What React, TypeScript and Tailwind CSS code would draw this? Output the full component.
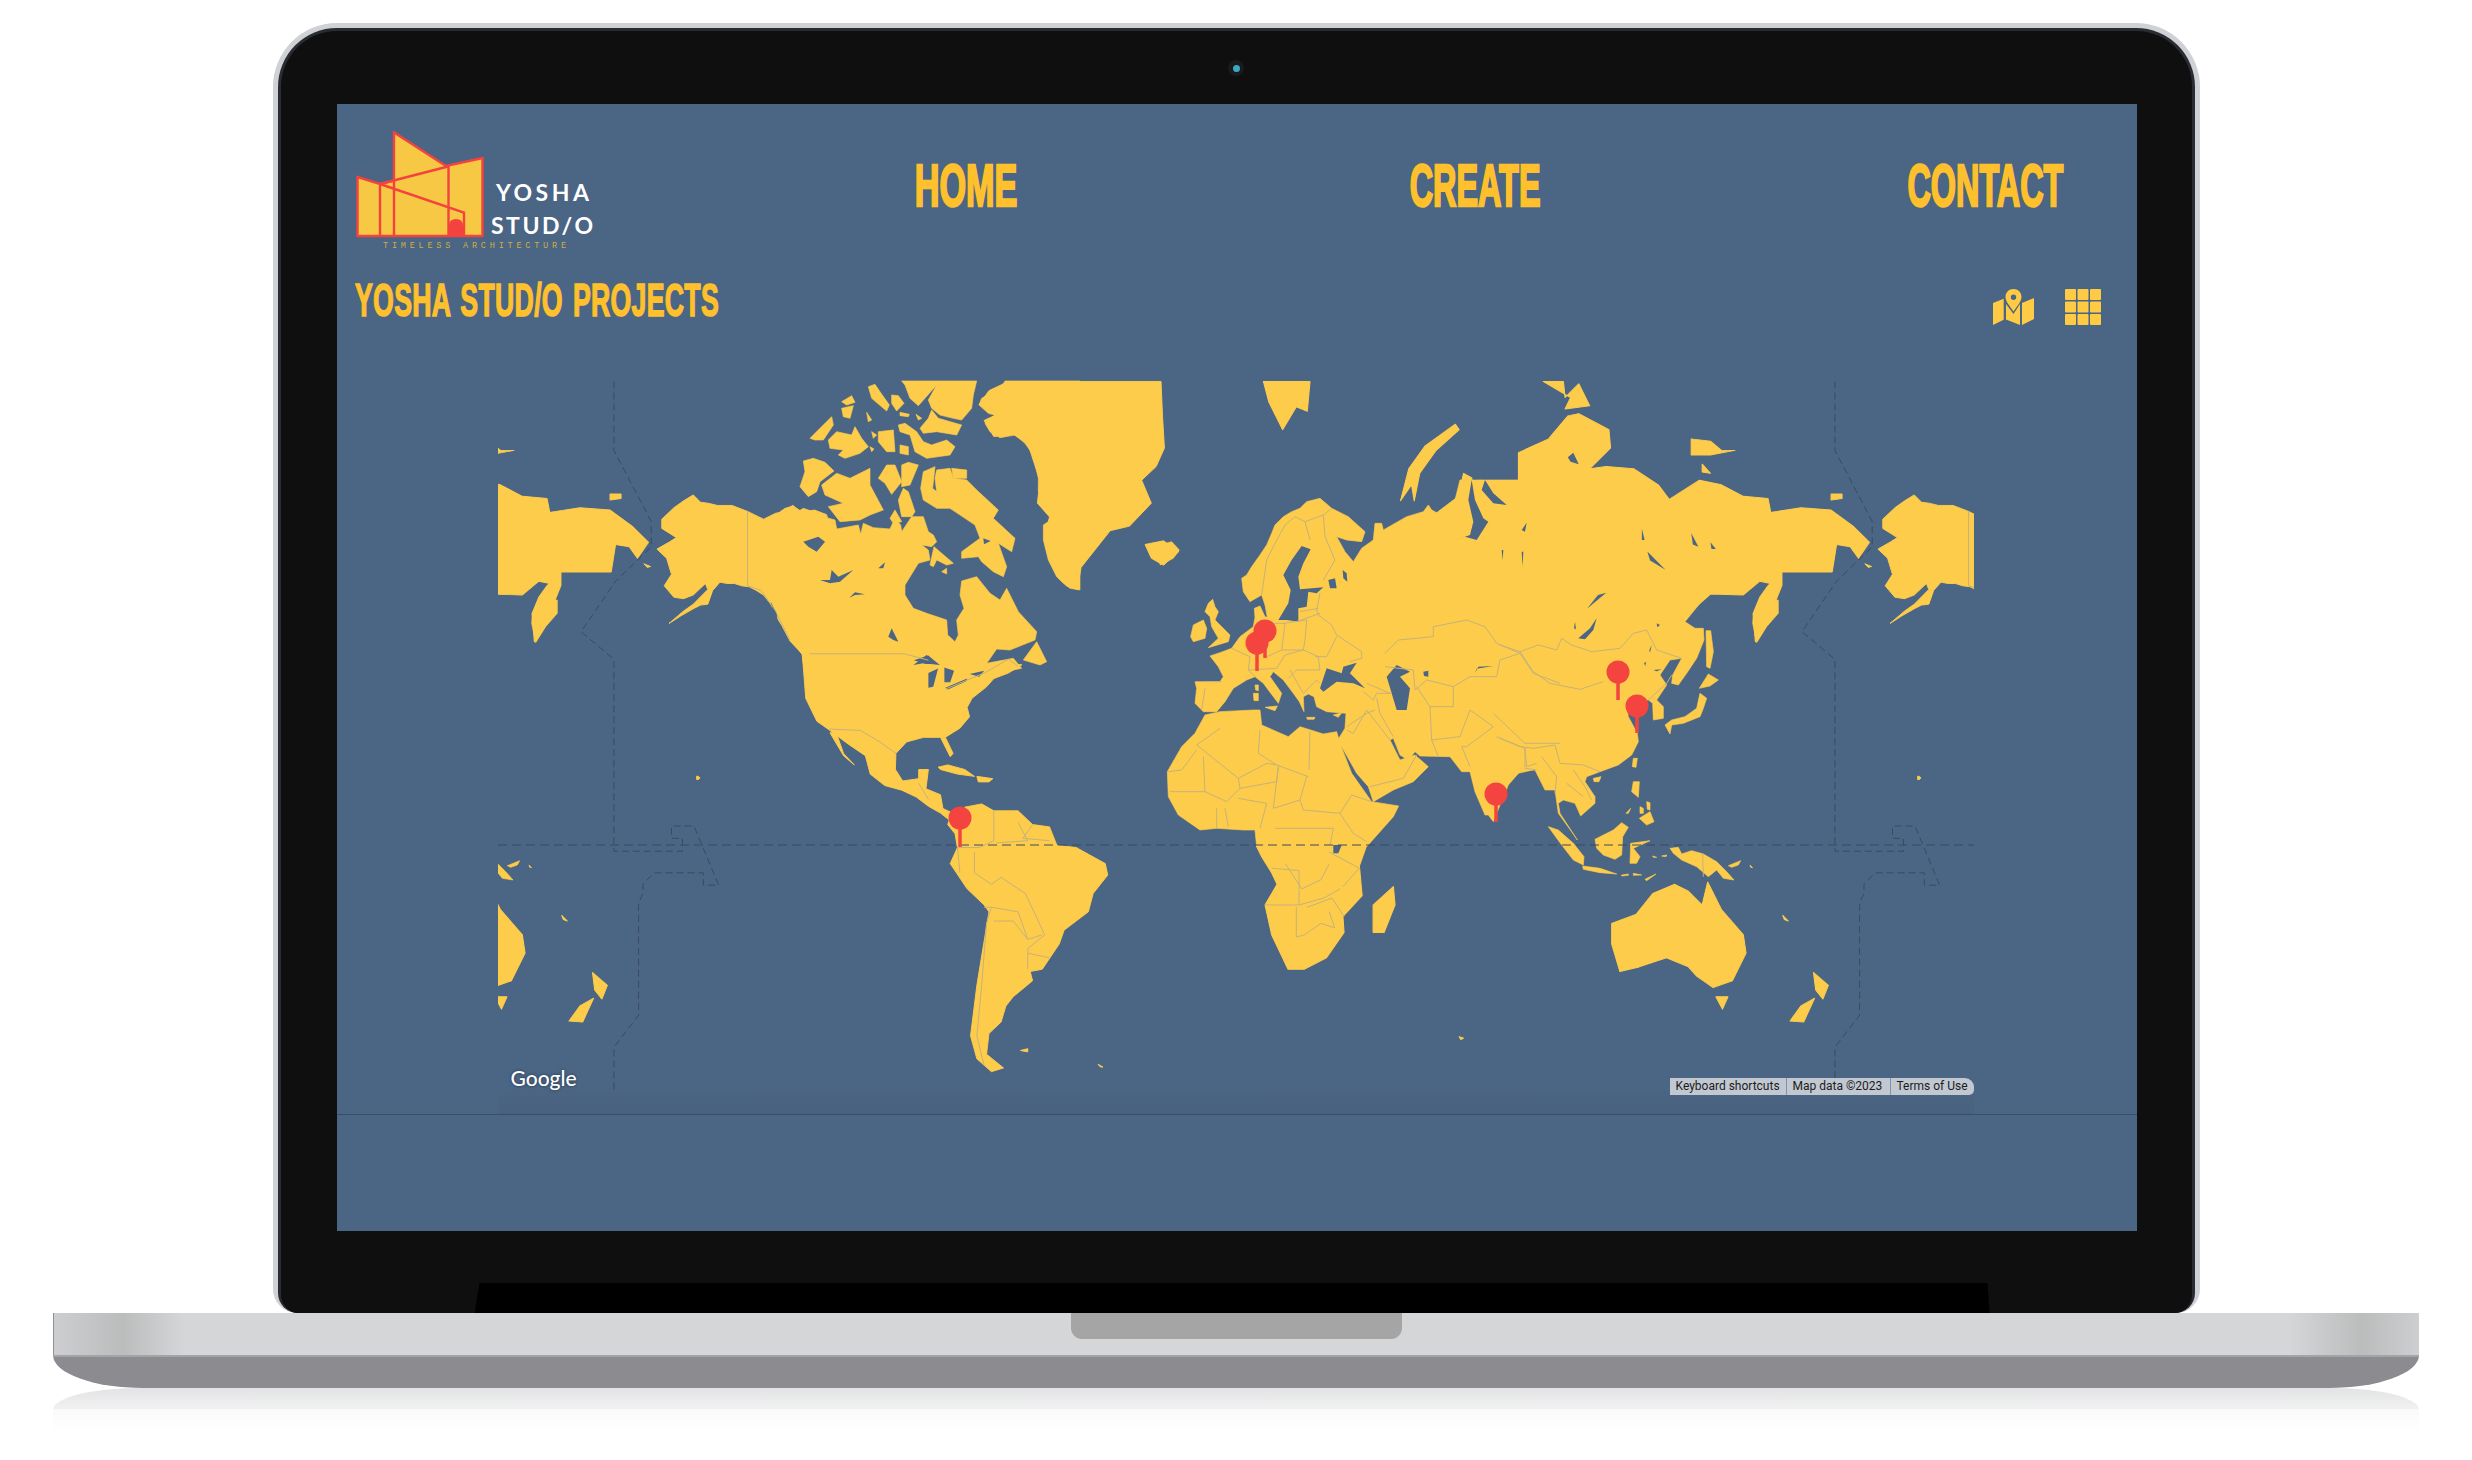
const T5 = 'translate(480 370) scale(0.48473 0.45918)';
const T6 = 'translate(1140 370) scale(0.54847 0.45918)';
const T7 = 'translate(1160 480) scale(0.33333)';
const T8 = 'translate(1500 600) scale(0.33333)';
const T9 = 'translate(780 375) scale(0.33333)';

// traced from crops of the reference, each group in its own crop coordinates
const layers: { t: string; land: string[]; water: string[]; lines: string[] }[] = [
  {
    t: T5,
    land: [
      '375,325 400,300 420,285 440,272 455,288 470,290 490,295 520,295 552,308 585,325 610,312 630,308 645,295 665,310 690,305 715,315 740,420 700,600 660,610 640,590 625,560 610,535 600,510 585,490 570,480 555,472 540,470 525,465 510,465 495,462 480,480 470,510 455,512 440,520 415,535 390,552 420,525 440,510 470,478 465,465 440,490 420,498 400,495 380,470 395,445 385,410 365,390 390,375 405,365 375,345',
      '625,560 665,620 672,715 695,765 722,785 760,815 795,840 805,880 835,905 870,915 900,930 925,950 950,965 968,980 975,965 955,955 950,925 920,912 925,870 905,870 905,890 872,895 857,870 858,835 880,810 915,800 950,800 970,842 976,835 960,800 990,780 1010,755 1005,735 1015,715 1045,690 1060,672 1090,660 1118,642 1070,640 1040,650 800,610 640,590',
      '722,790 735,790 750,835 772,860 750,840',
      '968,980 985,985 1000,952 1035,945 1060,960 1110,960 1140,990 1175,995 1190,1035 1230,1040 1290,1075 1295,1100 1265,1140 1255,1180 1205,1220 1195,1250 1160,1305 1135,1310 1140,1330 1100,1365 1085,1385 1075,1420 1050,1445 1045,1490 1080,1520 1055,1528 1025,1500 1012,1450 1025,1340 1050,1180 1040,1165 1005,1130 970,1075 985,1040 980,1010 965,990',
      '1090,25 1405,25 1408,100 1412,170 1395,210 1365,240 1385,290 1340,340 1300,350 1270,390 1240,430 1232,478 1210,470 1175,410 1165,360 1175,320 1150,290 1155,240 1130,160 1100,140 1060,145 1040,110 1070,95 1030,75 1050,45',
      '1372,380 1410,372 1442,395 1410,425 1385,410',
      '945,865 965,860 1000,870 1020,885 985,880 950,870',
      '1025,885 1058,890 1050,897 1028,897',
      '448,884 454,888 450,892',
      '1115,1482 1130,1478 1130,1485',
      '1275,1512 1285,1518 1280,1518',
      '338,422 352,428 345,430',
    ],
    water: [
      '895,632 925,622 945,640 920,640',
      '925,692 925,660 945,650 935,690',
      '958,648 978,655 970,680 958,680',
      '960,692 1005,672 1003,678 965,696',
      '1010,662 1040,655 1030,668',
      '600,505 612,530 618,575 606,555',
    ],
    lines: [
      '552,308 552,470 580,480 610,525 640,590',
      '680,618 875,618 925,632',
      '960,695 1040,660 1090,630 1110,645',
      '720,782 785,785 825,810 858,835',
      '905,900 925,935',
      '985,1040 1030,1040 1060,1025 1060,960',
      '1065,1030 1130,1025 1110,985',
      '1140,990 1120,1020 1175,1025',
      '1020,1050 1020,1095 1055,1120 1075,1105 1125,1140 1165,1230 1130,1260 1130,1305',
      '1055,1170 1110,1180 1130,1240 1160,1230',
      '1045,1205 1035,1340 1025,1450 1040,1515',
      '1060,1200 1100,1200 1130,1240',
      '1130,1270 1175,1280',
      '985,1040 990,1095',
      '1040,1170 1055,1170 1045,1205',
    ],
  },
  {
    t: T6,
    land: [
      '620,240 665,255 665,295 690,265 690,180 745,150 780,100 800,95 855,130 858,170 820,215 850,210 900,215 945,250 965,282 1020,240 1060,250 1100,275 1145,280 1150,310 1205,300 1260,305 1300,340 1330,375 1310,410 1295,385 1270,380 1262,440 1170,440 1170,470 1130,460 1100,490 1040,488 1000,530 960,600 850,650 500,700 520,330',
      '1170,440 1170,470 1150,530 1140,555 1122,592 1118,530 1130,495 1145,470',
      '575,300 590,225 605,235 605,300',
      '475,285 490,215 520,165 575,118 582,130 540,175 510,225 500,285 495,250',
      '225,25 310,25 305,90 285,80 260,130 235,70',
      '735,25 772,25 775,60 800,30 820,78 775,85 785,60',
      '1005,150 1040,155 1060,175 1085,175 1040,185 1005,185',
      '1025,205 1040,225 1025,222',
      '1260,270 1280,270 1280,280 1260,283',
      '228,1165 250,1120 240,1095 222,1060 212,1036 413,1036 400,1080 405,1145 370,1190 372,1225 340,1280 300,1305 270,1305 240,1230',
      '462,1125 465,1165 445,1225 425,1225 425,1165',
      '860,1205 905,1185 935,1140 975,1120 1000,1135 1025,1165 1035,1115 1060,1175 1100,1230 1105,1270 1080,1330 1045,1345 1015,1320 1000,1300 960,1280 910,1300 875,1310 860,1250',
      '1050,1365 1072,1365 1062,1392',
      '1228,1312 1255,1340 1245,1370 1232,1350',
      '1230,1368 1210,1420 1185,1418 1205,1385',
      '582,1452 590,1455 585,1458',
      '1172,1188 1182,1200 1175,1197',
      '1418,885 1422,890 1418,892',
    ],
    water: [
      '780,190 790,180 800,205 785,200',
      '915,345 920,370 915,370',
      '1005,355 1018,385 1008,380',
      '925,395 958,435 930,415',
      '835,490 850,485 815,520',
      '1040,375 1050,390 1042,390',
    ],
    lines: [
      '228,1165 290,1165 335,1150 365,1130',
      '285,1170 285,1235 300,1230 330,1205 355,1215 345,1180',
      '345,1050 400,1085 370,1125',
      '240,1085 290,1090 290,1165',
      '265,1075 295,1130 330,1110 345,1075',
      '305,1170 350,1150 372,1190',
    ],
  },
  {
    t: T7,
    land: [
      '150,528 180,518 215,505 240,470 280,440 285,412 283,385 300,378 315,410 322,412 315,375 305,345 270,365 250,335 245,295 260,285 275,260 300,225 320,195 335,160 345,135 370,110 395,95 420,85 440,65 480,55 515,85 565,110 615,155 605,185 560,180 530,170 555,215 580,245 605,205 640,180 645,130 665,130 670,150 740,110 790,95 805,75 815,90 880,125 895,130 885,60 900,0 1200,0 1200,960 1190,930 1165,915 1125,850 1115,870 1075,880 1045,915 1010,1000 1000,1025 985,1005 975,1005 945,935 930,875 905,875 870,830 780,828 765,815 745,840 720,825 700,775 690,780 720,840 765,825 805,860 760,905 700,930 640,965 625,920 590,880 545,800 530,785 555,745 558,700 500,695 470,680 462,650 445,642 430,650 432,695 418,665 400,640 370,600 340,575 330,590 365,640 355,670 310,610 285,590 260,600 220,625 195,665 170,695 130,695 105,670 110,625 105,605 180,605 190,590 175,560',
      '145,370 158,358 165,380 175,395 165,420 210,465 205,485 145,503 175,475 155,440 150,410 135,395',
      '100,435 130,420 140,445 135,475 100,485 92,470',
      '0,195 35,185 58,210 40,235 0,255',
      '315,682 352,678 345,692',
      '280,640 295,640 295,662 282,662',
      '285,615 295,615 295,632 287,630',
      '440,712 465,712 462,718 442,718',
      '520,705 545,698 535,712',
      '300,690 280,690 180,695 135,705 105,760 65,800 22,875 25,950 55,1005 120,1050 170,1045 250,1050 285,1050 290,1100 620,1100 700,1010 716,978 635,965 575,880 540,790 530,755 490,762 420,740 385,770 305,735',
    ],
    water: [
      '425,198 452,208 430,250 415,290 420,328 490,322 470,340 445,335 440,380 415,385 415,425 380,420 355,420 385,370 392,330 370,285 395,240',
      '480,625 500,565 545,580 550,560 590,548 570,580 615,625 580,610 530,605 490,635',
      '680,590 710,555 750,575 720,590 750,625 740,690 710,690 695,640',
      '505,300 525,295 530,325 510,325',
      '548,270 560,280 562,305 550,295',
      '945,580 955,560 1000,558 950,566',
      '790,575 805,572 805,590 792,588',
      '935,0 945,60 970,115 985,125 950,180 915,170 870,185 930,165 940,125 925,60',
      '975,0 965,30 1000,70 1040,75 1000,40',
      '1025,210 1030,210 1028,240',
      '1085,215 1090,215 1088,260',
      '1085,150 1100,128 1095,155',
      '520,1095 545,1095 535,1120 520,1120',
    ],
    lines: [
      '305,345 320,240 345,190 375,135 405,110 435,125 490,105 515,85',
      '435,125 450,180',
      '490,105 495,170 525,240 490,300',
      '480,340 470,390 475,405 515,435 530,465 605,515 605,535 570,545',
      '420,395 475,385',
      '410,425 480,400',
      '465,530 500,530 530,470',
      '370,430 440,420 435,480 430,510 365,510',
      '305,430 375,430 365,510 320,530',
      '215,505 270,530 265,570 285,590',
      '135,605 185,605',
      '135,625 125,690',
      '265,570 350,565 375,525 430,510 475,530 480,570 410,570 385,595',
      '390,570 430,640 470,600 480,610',
      '610,635 640,660 650,640 695,640',
      '620,610 690,640',
      '650,655 660,700 700,770',
      '645,690 620,700 560,740',
      '560,750 580,760 620,690 690,780',
      '630,920 730,895 770,825',
      '450,755 447,870',
      '300,750 295,820 350,855 445,890',
      '180,745 110,795 235,895 320,850 350,855',
      '110,810 65,870 25,875',
      '130,830 135,935 30,935',
      '235,895 240,925 200,965 135,935',
      '240,925 350,905 355,860',
      '355,860 340,985 420,960 440,890',
      '235,955 320,970 300,1045',
      '170,985 170,1045',
      '195,985 205,1040',
      '420,960 430,990 540,1000 575,945 635,965',
      '345,1045 385,1045 520,1045 510,1095',
      '540,1000 580,1060 620,1085',
      '675,520 715,480 820,470 820,440 920,420 975,440 1010,490 1080,520',
      '675,560 760,570 765,630 800,600 880,620 930,590 1010,590 1020,540 1080,520',
      '1080,520 1120,580 1200,610',
      '770,620 810,680 880,680 880,620',
      '810,680 815,780 835,830',
      '815,780 900,770 930,690 1000,740',
      '1000,740 920,800 905,800 930,860',
      '1010,770 1095,805',
      '1000,700 1095,790 1200,790',
      '1095,805 1100,860 1130,850',
    ],
  },
  {
    t: T8,
    land: [
      '608,0 555,65 585,85 610,85 612,120 590,175 560,220 535,255 515,250 518,225 545,175 510,180 480,225 500,255 470,300 490,320 490,355 460,360 458,310 445,300 378,305 385,350 412,400 415,425 395,465 355,495 300,515 260,530 255,545 285,590 285,610 242,648 225,610 190,600 175,610 180,640 232,720 215,695 175,640 165,570 135,570 105,510 60,515 20,555 0,570 0,0',
      '618,92 632,92 640,155 630,205 620,200',
      '598,265 625,222 655,240 630,258',
      '495,375 515,360 555,350 590,325 600,280 620,295 610,325 600,350 550,370 515,375 510,402',
      '400,475 412,475 408,502 397,500',
      '280,535 303,530 297,545 282,545',
      '760,40 790,5 835,0 835,40 800,80 770,128 758,70',
      '400,545 418,545 415,592 395,575',
      '418,655 450,635 462,665 440,675',
      '420,620 430,625 430,640 420,640',
      '440,605 450,608 450,630 442,628',
      '378,640 392,625 385,640',
      '285,718 340,690 365,668 385,682 368,710 365,765 345,778 310,765 290,745',
      '145,680 175,690 220,730 252,770 250,795 220,780 185,735',
      '248,798 300,805 350,822 300,818 250,808',
      '365,825 385,822 385,826 365,828',
      '400,820 425,825 400,826',
      '435,838 468,822 440,842',
      '392,730 450,722 415,738 400,745 420,770 410,790 390,790',
      '458,768 470,772 460,772',
      '485,768 500,765 498,770',
      '510,745 535,742 545,762 575,752 610,762 650,785 680,815 702,840 670,835 650,810 625,830 590,800 545,780 520,760',
      '685,797 722,782 715,795 695,802',
      '750,795 758,803 752,802',
    ],
    water: [
      '235,115 270,85 290,55 280,90 255,118',
      '460,210 485,208 470,214',
      '225,65 228,88 222,85',
      '432,190 438,185 436,198',
      '448,150 455,135 450,158',
      '470,70 480,75 472,82',
    ],
    lines: [
      '0,135 60,155 115,135 170,150 185,115 215,135 275,155 360,145 400,100 440,90 470,150 545,175',
      '60,155 100,215 150,250 240,268 310,245',
      '445,300 500,250 515,225',
      '0,415 60,440 100,445 165,435 180,490 250,495 300,515',
      '75,445 75,505 110,510',
      '125,470 170,530 165,580',
      '220,510 255,560 275,600',
      '200,550 250,590',
      '608,762 610,830',
    ],
  },
  {
    t: T9,
    land: [
      '0,410 15,400 40,392 50,412 70,400 100,410 130,425 165,435 170,462 235,450 242,478 250,445 280,458 330,462 345,430 362,450 365,470 395,425 430,425 445,470 460,480 470,500 455,515 425,510 445,525 450,555 415,565 375,630 375,660 400,700 440,715 500,735 503,780 525,800 535,780 530,735 552,700 540,660 545,618 590,605 630,655 660,675 680,640 715,710 770,770 765,795 690,825 650,822 620,865 700,850 725,880 700,885 640,900 75,900 66,837 30,798 9,756 0,735',
      '730,855 770,800 800,860 780,870',
      '450,570 462,515 520,565 500,570 470,555 460,575',
      '485,590 500,580 500,597',
      '470,285 510,280 520,310 560,315 590,345 655,405 640,430 705,490 695,530 655,505 680,575 670,605 640,590 605,560 595,545 545,550 545,530 600,490 585,450 555,430 510,400 470,400 430,375 422,340 430,290 465,275 458,340 470,350 465,310',
      '515,280 560,285 560,310 520,310',
      '385,262 415,270 390,330 365,335 365,270',
      '295,310 320,270 345,270 365,320 335,358 315,325',
      '370,340 385,350 405,410 395,425 365,425 355,375',
      '330,430 345,405 365,440 340,445',
      '125,330 170,295 210,310 240,295 270,280 270,330 310,405 270,420 240,435 180,440 145,395 190,385 135,360',
      '70,258 100,250 135,262 162,288 120,320 110,350 85,365 60,335 75,290',
      '365,18 590,18 580,60 575,100 545,135 520,130 480,120 455,100 445,75 470,30 415,92 390,70 375,30',
      '265,35 285,28 300,50 328,90 320,108 275,70',
      '335,60 355,62 372,85 350,108 335,85',
      '185,80 215,62 225,82 200,90',
      '185,100 220,92 210,130 190,125',
      '360,112 388,118 385,125 360,122',
      '408,118 425,130 415,135',
      '355,150 375,145 410,170 430,200 455,210 500,195 525,215 510,240 440,250 405,230 390,180 360,170',
      '420,160 445,130 455,105 475,130 545,150 530,180 470,170 430,175',
      '90,190 120,160 155,125 160,150 130,195 105,195',
      '145,195 170,170 215,180 225,155 245,190 265,215 240,235 195,250 175,240 190,225 150,220',
      '295,170 340,165 345,230 320,230 295,200',
      '360,210 385,215 385,240 360,235',
      '260,112 275,135 265,140',
      '275,170 290,180 280,190',
      '270,215 282,222 275,230',
      '675,18 900,18 900,645 870,640 850,625 830,605 805,555 790,495 790,450 820,430 815,385 775,350 775,310 760,240 735,205 705,180 660,188 630,170 615,145 660,125 625,115 597,90 605,70 665,35',
    ],
    water: [
      '70,500 115,485 135,500 110,530 85,515',
      '120,615 150,615 155,585 175,605 220,585 180,620 150,625',
      '208,668 225,652 255,658 225,660',
      '325,785 335,760 355,800 340,795',
      '295,580 315,562 310,580',
      '400,870 440,840 480,870 430,865',
      '555,455 575,450 578,470 555,478',
      '610,490 632,498 612,508',
    ],
    lines: [],
  },
];

const dateLine =
  '1267,25 1267,175 1335,330 1335,385 1270,460 1207,570 1267,630 1267,1048 1392,1048 1392,1020 1372,1020 1372,993 1413,993 1458,1122 1430,1122 1430,1095 1340,1095 1320,1120 1320,1140 1312,1160 1312,1405 1267,1475 1267,1568';

const pins = [
  { x: 960, y: 818, tip: 847 },
  { x: 1265, y: 631, tip: 658 },
  { x: 1257, y: 643, tip: 671 },
  { x: 1496, y: 794, tip: 822 },
  { x: 1618, y: 672, tip: 700 },
  { x: 1637, y: 706, tip: 733 },
];

function WorldMap() {
  return (
    <svg viewBox="498 380 1476 734" className="block h-[734px] w-[1476px]">
      <defs>
        <clipPath id="map-clip">
          <rect x="498" y="380" width="1476" height="734" />
        </clipPath>
        <g id="world">
          {layers.map((l, i) => (
            <g key={i} transform={l.t} fill="#fecc4b" stroke="#fecc4b" strokeWidth="2" strokeLinejoin="round">
              {l.land.map((p, j) => (
                <polygon key={j} points={p} />
              ))}
            </g>
          ))}
          {layers.map((l, i) => (
            <g key={i} transform={l.t} fill="#4b6584">
              {l.water.map((p, j) => (
                <polygon key={j} points={p} />
              ))}
            </g>
          ))}
          {layers.map((l, i) => (
            <g key={i} transform={l.t} fill="none" stroke="#c6b27a" strokeWidth="1">
              {l.lines.map((p, j) => (
                <polyline key={j} points={p} vectorEffect="non-scaling-stroke" />
              ))}
            </g>
          ))}
          <g transform={T6}>
            <polyline
              points={dateLine}
              fill="none"
              stroke="#3a4a60"
              strokeWidth="1"
              strokeDasharray="7 4"
              vectorEffect="non-scaling-stroke"
            />
          </g>
        </g>
      </defs>
      <g clipPath="url(#map-clip)">
        <use href="#world" />
        <use href="#world" x="-1221" />
        <use href="#world" x="1221" />
        <line x1="498" y1="845" x2="1974" y2="845" stroke="#3a4a60" strokeWidth="1" strokeDasharray="9 5" />
        {pins.map((p, i) => (
          <g key={i} fill="#f4443f">
            <rect x={p.x - 1.75} y={p.y} width="3.5" height={p.tip - p.y} />
            <circle cx={p.x} cy={p.y} r="11.5" />
          </g>
        ))}
      </g>
    </svg>
  );
}

function Logo() {
  return (
    <svg viewBox="355 130 245 120" className="block h-[120px] w-[245px] shrink-0">
      <polygon
        points="357.5,177 380,184 394,180.5 394,132.5 446,166 482.5,158 482.5,236 357.5,236"
        fill="#f7c843"
        stroke="#f4433f"
        strokeWidth="2.400"
      />
      <g stroke="#f4433f" strokeWidth="2.400" fill="none">
        <line x1="380" y1="184" x2="380" y2="236" />
        <line x1="394" y1="180" x2="394" y2="236" />
        <line x1="448.5" y1="166" x2="448.5" y2="236" />
        <line x1="380" y1="184" x2="448" y2="166.5" />
        <polyline points="380,184 464,212.5 464,236" />
      </g>
      <path d="M449 236V226Q449 219 456 219Q463 219 463 226V236Z" fill="#f4433f" />
      <g fill="#ffffff" fontFamily="Lato, sans-serif" fontWeight="700" fontSize="23">
        <text x="496" y="201" textLength="93">
          YOSHA
        </text>
        <text x="491" y="234" textLength="102">
          STUD/O
        </text>
      </g>
      <text x="383" y="248" textLength="183" fontFamily="'Liberation Mono', monospace" fontSize="8.5" fill="#d0ae3e">
        TIMELESS ARCHITECTURE
      </text>
    </svg>
  );
}

function MapIcon() {
  return (
    <svg viewBox="0 0 41 36" className="h-[36px] w-[41px]" fill="#ffcb45">
      <path d="M20.5 0C16 0 12.500 3.500 12.500 8c0 4.500 5 10 8 14.500 3-4.500 8-10 8-14.500 0-4.500-3.500-8-8-8Zm0 5.500a2.700 2.700 0 1 1 0 5.400 2.700 2.700 0 0 1 0-5.400Z" fillRule="evenodd" />
      <polygon points="0,14 10.700,9.700 10.700,30.700 0,36" />
      <path d="M13 15 20.500 25 27 15V36L13 30.500Z" />
      <polygon points="29,14 41,9 41,30 29,36" />
    </svg>
  );
}

function GridIcon() {
  const cells = [0, 12.5, 25];
  return (
    <svg viewBox="0 0 36 36" className="h-[36px] w-[36px]" fill="#ffcb45">
      {cells.map((y) => cells.map((x) => <rect key={`${x}-${y}`} x={x} y={y} width="11" height="11" rx="1" />))}
    </svg>
  );
}

export default function App() {
  return (
    <div className="flex h-[1460px] w-[2472px] flex-col items-center overflow-hidden bg-white pt-[23px]">
      {/* Lid */}
      <div className="h-[1290px] w-[1927px] shrink-0 rounded-t-[64px] rounded-b-[24px] bg-[#d0d1d5] px-[5px] pt-[5px]">
        <div className="h-full rounded-t-[59px] rounded-b-[20px] bg-[#2a2c33] px-[3px] pt-[3px]">
          <div className="flex h-full flex-col items-center rounded-t-[56px] rounded-b-[18px] bg-[#0f0f0f]">
            <div className="h-[73px] pt-[29px]">
              <div className="flex h-[16px] w-[16px] items-center justify-center rounded-full bg-[#1a1a1c]">
                <div className="h-[7px] w-[7px] rounded-full bg-[#3aa9c4]" />
              </div>
            </div>

            {/* Screen */}
            <div className="ml-[1px] h-[1127px] w-[1800px] shrink-0 bg-[#4b6584]">
              <div className="flex pl-[18px] pt-[26px]">
                <div className="w-[511px]">
                  <Logo />
                </div>
                <nav className="mt-[24px] flex gap-[310px] font-['Liberation_Sans',sans-serif] text-[60px] font-bold leading-[63px] text-[#ffc02d] [-webkit-text-stroke:2.500px_#ffc02d]">
                  <a className="flex w-[200px] justify-center whitespace-nowrap">
                    <span className="inline-block scale-x-[0.57]">HOME</span>
                  </a>
                  <a className="flex w-[200px] justify-center whitespace-nowrap">
                    <span className="inline-block scale-x-[0.54]">CREATE</span>
                  </a>
                  <a className="flex w-[200px] justify-center whitespace-nowrap">
                    <span className="inline-block scale-x-[0.54]">CONTACT</span>
                  </a>
                </nav>
              </div>

              <div className="mt-[26px] flex items-start justify-between pl-[18px] pr-[36px]">
                <h1 className="origin-left scale-x-[0.58] whitespace-nowrap font-['Liberation_Sans',sans-serif] text-[46px] font-bold leading-[48px] tracking-[0.5px] text-[#ffc02d] [word-spacing:4px] [-webkit-text-stroke:1.500px_#ffc02d]">
                  YOSHA STUD/O PROJECTS
                </h1>
                <div className="mt-[13px] flex gap-[31px]">
                  <MapIcon />
                  <GridIcon />
                </div>
              </div>

              {/* Map */}
              <div className="mt-[55px] border-b border-[#3e4c62] pl-[161px]">
                <div className="relative w-[1476px]">
                  <WorldMap />
                  <div className="absolute inset-x-0 bottom-0 h-[28px] bg-gradient-to-b from-transparent to-[#0000000a]" />
                  <span className="absolute bottom-[23px] left-[13px] font-['Lato',sans-serif] text-[21px] font-medium leading-[26px] text-white [text-shadow:0_0_3px_#22304a]">
                    Google
                  </span>
                  <div className="absolute bottom-[19px] right-0 flex h-[17px] items-center rounded-tr-[9px] rounded-br-[5px] bg-[#c1c8d2] font-['Roboto',sans-serif] text-[12px] leading-[17px] text-[#1c1c1c]">
                    <span className="w-[116px] pl-[6px]">Keyboard shortcuts</span>
                    <span className="w-[104px] border-l border-[#7f93ad] pl-[6px]">Map data ©2023</span>
                    <span className="w-[84px] border-l border-[#7f93ad] pl-[6px]">Terms of Use</span>
                  </div>
                </div>
              </div>
            </div>

            {/* Notch */}
            <div className="mr-[8px] mt-[52px] h-[30px] w-[1515px] bg-black [clip-path:polygon(5px_0,1513px_0,1515px_100%,0_100%)]" />
          </div>
        </div>
      </div>

      {/* Base */}
      <div className="relative w-[2366px] shrink-0">
        <div className="h-[42px] border-l border-[#8f8f94] bg-[linear-gradient(to_right,#cdced0,#bbbcbc_2.900%,#d5d6d8_5.500%,#d5d6d8_94.500%,#bbbcbc_97.600%,#cdced0)]" />
        <div className="h-[33px] rounded-b-[90px_33px] border-t-2 border-[#a4a4a8] bg-[#8c8b90]" />
        <div className="h-[45px] rounded-t-[85px_22px] bg-[linear-gradient(to_bottom,#e2e3e4,#f1f1f2_46%,#fafafa_48%,#ffffff)]" />
        <div className="absolute left-[1018px] top-0 h-[26px] w-[331px] rounded-b-[11px] bg-[#a5a5a5]" />
      </div>
    </div>
  );
}
